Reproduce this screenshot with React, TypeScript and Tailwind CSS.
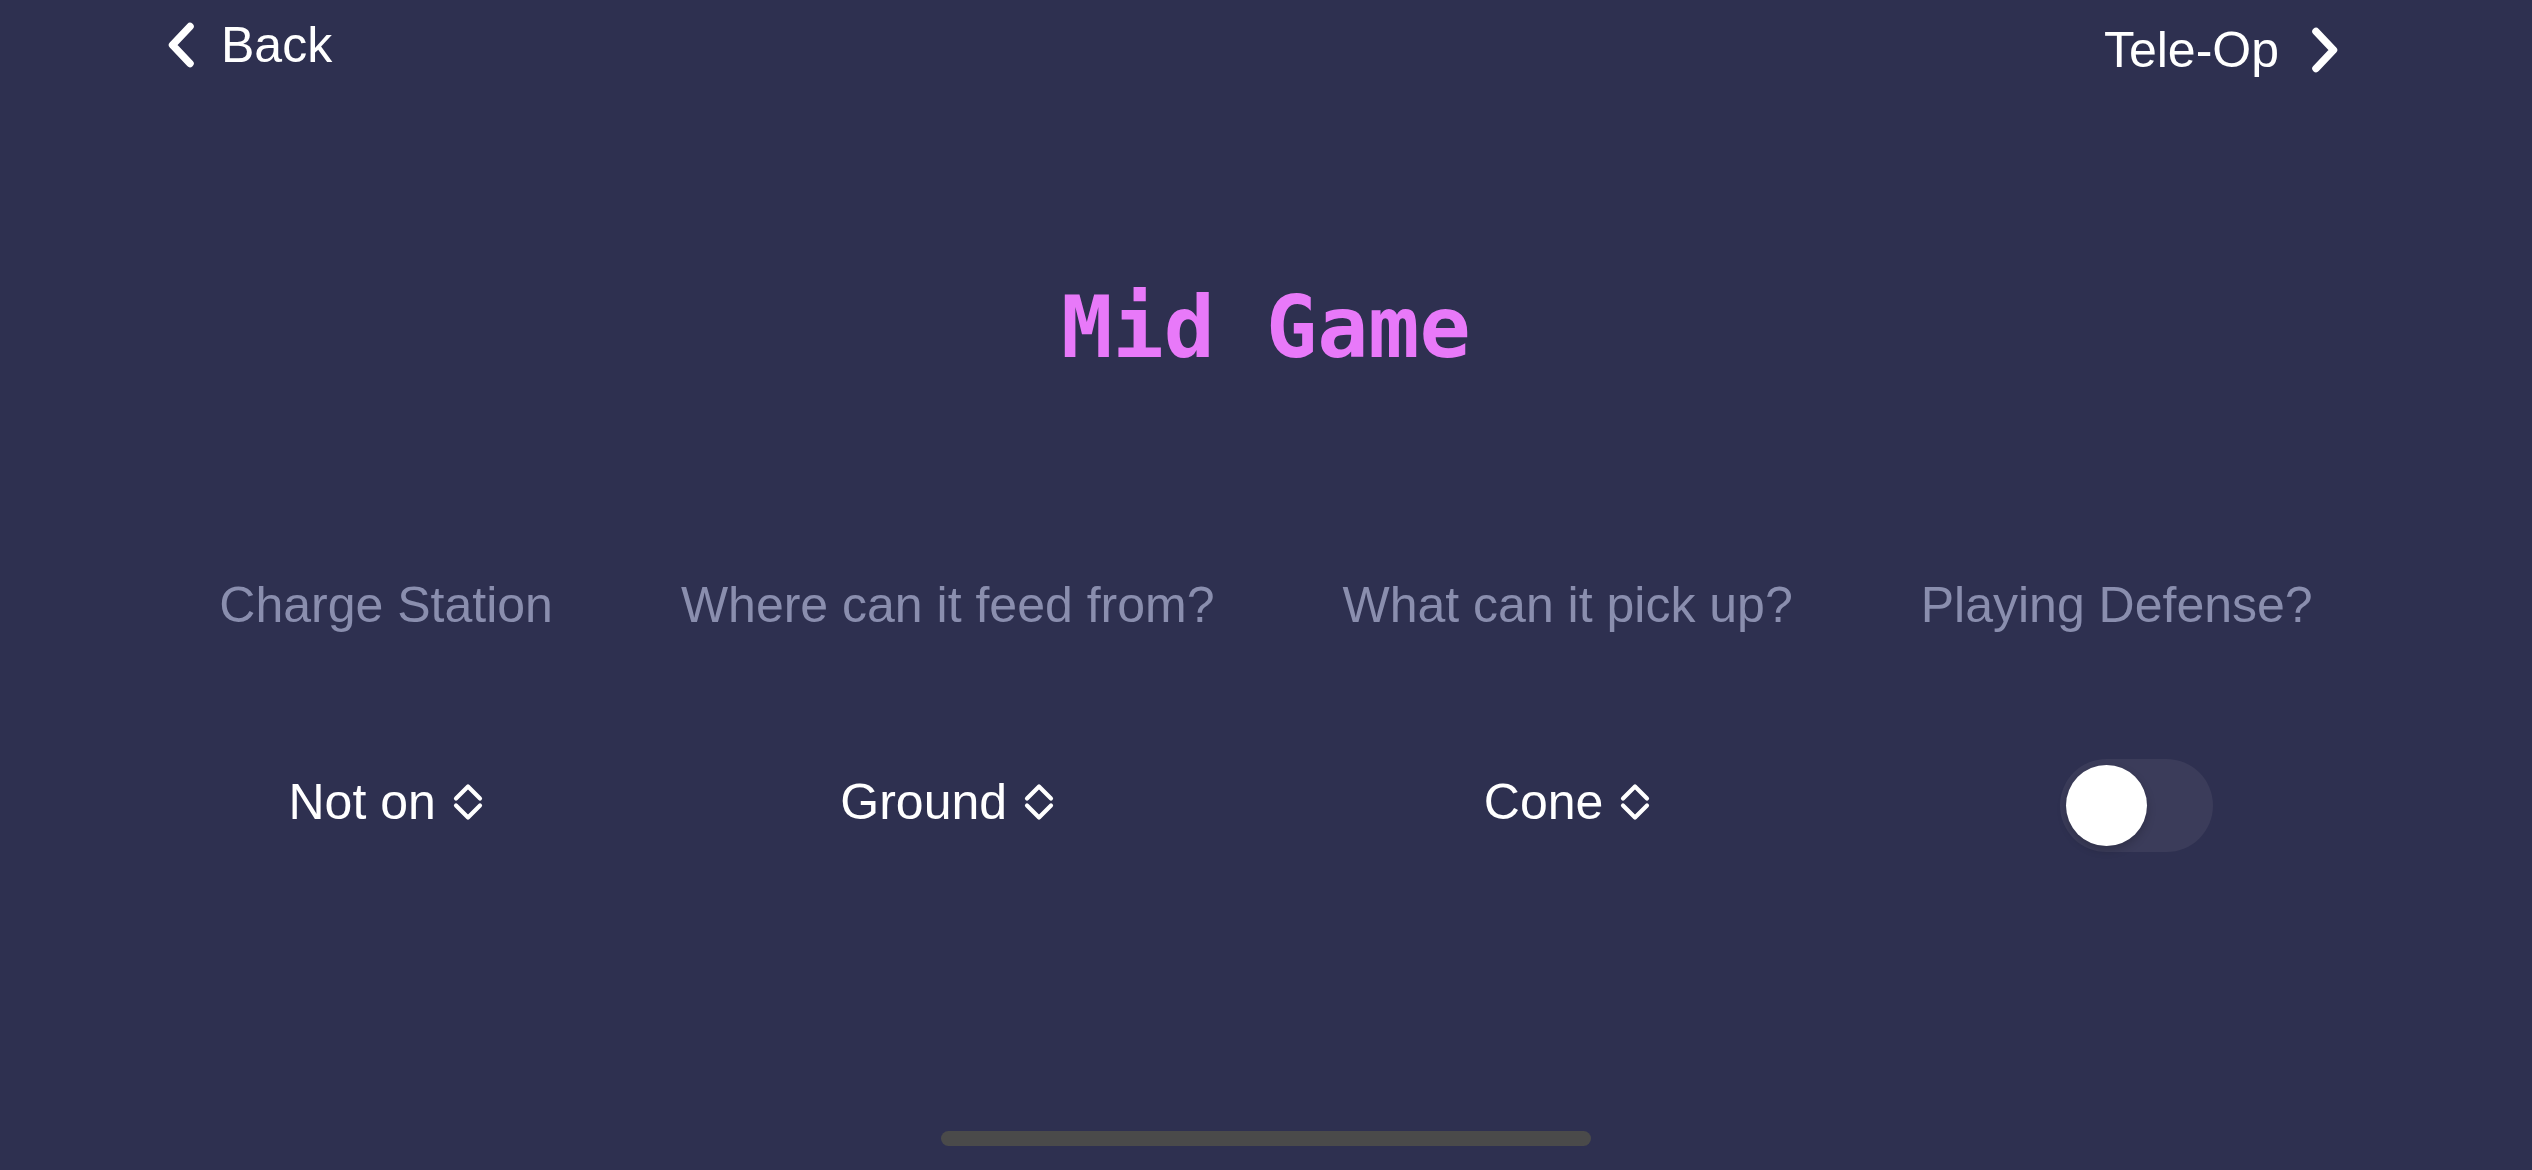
import React, { useState } from "react";

const sans = { fontFamily: '"Liberation Sans", Arial, sans-serif' };

const ChevronLeft = () => (
    <svg width="27" height="46" viewBox="0 0 27 46" fill="none">
        <polyline
            points="22,4.5 4.5,23 22,41.5"
            stroke="white"
            strokeWidth="7.5"
            strokeLinecap="round"
            strokeLinejoin="round"
        />
    </svg>
);

const ChevronRight = () => (
    <svg width="27" height="46" viewBox="0 0 27 46" fill="none">
        <polyline
            points="5,4.5 22.5,23 5,41.5"
            stroke="white"
            strokeWidth="7.5"
            strokeLinecap="round"
            strokeLinejoin="round"
        />
    </svg>
);

const UpDown = () => (
    <svg width="32" height="38" viewBox="0 0 32 38" fill="none">
        <polyline
            points="4,15.5 16,3.5 28,15.5"
            stroke="white"
            strokeWidth="4.2"
            strokeLinecap="round"
            strokeLinejoin="round"
        />
        <polyline
            points="4,22.5 16,34.5 28,22.5"
            stroke="white"
            strokeWidth="4.2"
            strokeLinecap="round"
            strokeLinejoin="round"
        />
    </svg>
);

const Picker = ({ value }: { value: string }) => (
    <div className="flex h-[93px] items-center">
        <div className="flex items-center gap-[16px] pb-[8px]">
            <span className="text-[50px] leading-[60px] text-white">{value}</span>
            <UpDown />
        </div>
    </div>
);

const Toggle = () => {
    const [on, setOn] = useState(false);
    return (
        <div className="ml-[40px] flex h-[93px] items-center">
            <button
                onClick={() => setOn(!on)}
                className={
                    on
                        ? "flex h-[93px] w-[153px] items-center justify-end rounded-full bg-[#34c759] px-[6px]"
                        : "flex h-[93px] w-[153px] items-center justify-start rounded-full bg-[#3b3c5a] px-[6px]"
                }
            >
                <span className="h-[81px] w-[81px] rounded-full bg-white shadow-[0_4px_10px_rgba(0,0,0,0.2)]"></span>
            </button>
        </div>
    );
};

const App = () => {
    const columns = [
        { label: "Charge Station", control: <Picker value="Not on" /> },
        { label: "Where can it feed from?", control: <Picker value="Ground" /> },
        { label: "What can it pick up?", control: <Picker value="Cone" /> },
        { label: "Playing Defense?", control: <Toggle /> },
    ];

    return (
        <div
            className="flex h-[1170px] w-[2532px] flex-col overflow-hidden bg-[#2e3050]"
            style={sans}
        >
            {/* nav */}
            <div className="flex h-[80px] items-start justify-between pl-[168px] pr-[194px] pt-[15px]">
                <div className="flex items-center gap-[26px]">
                    <ChevronLeft />
                    <span className="text-[50px] leading-[60px] text-white">Back</span>
                </div>
                <div className="mt-[5px] flex items-center gap-[32px]">
                    <span className="text-[50px] leading-[60px] text-white">Tele-Op</span>
                    <ChevronRight />
                </div>
            </div>

            <h1
                className="mt-[205px] text-center text-[85px] font-bold leading-[85px] text-[#e879f9]"
                style={{ fontFamily: '"DejaVu Sans Mono", "Liberation Mono", monospace' }}
            >
                Mid Game
            </h1>

            <div className="mt-[205px] flex justify-center gap-[128px]">
                {columns.map((col) => (
                    <div key={col.label} className="flex flex-col items-center gap-[124px]">
                        <span className="text-[50px] leading-[60px] text-[#8a8eae]">
                            {col.label}
                        </span>
                        {col.control}
                    </div>
                ))}
            </div>

            <div className="flex-1"></div>
            <div className="mb-[24px] flex justify-center">
                <div className="h-[15px] w-[650px] rounded-full bg-[#4a4a4a]"></div>
            </div>
        </div>
    );
};

export default App;
